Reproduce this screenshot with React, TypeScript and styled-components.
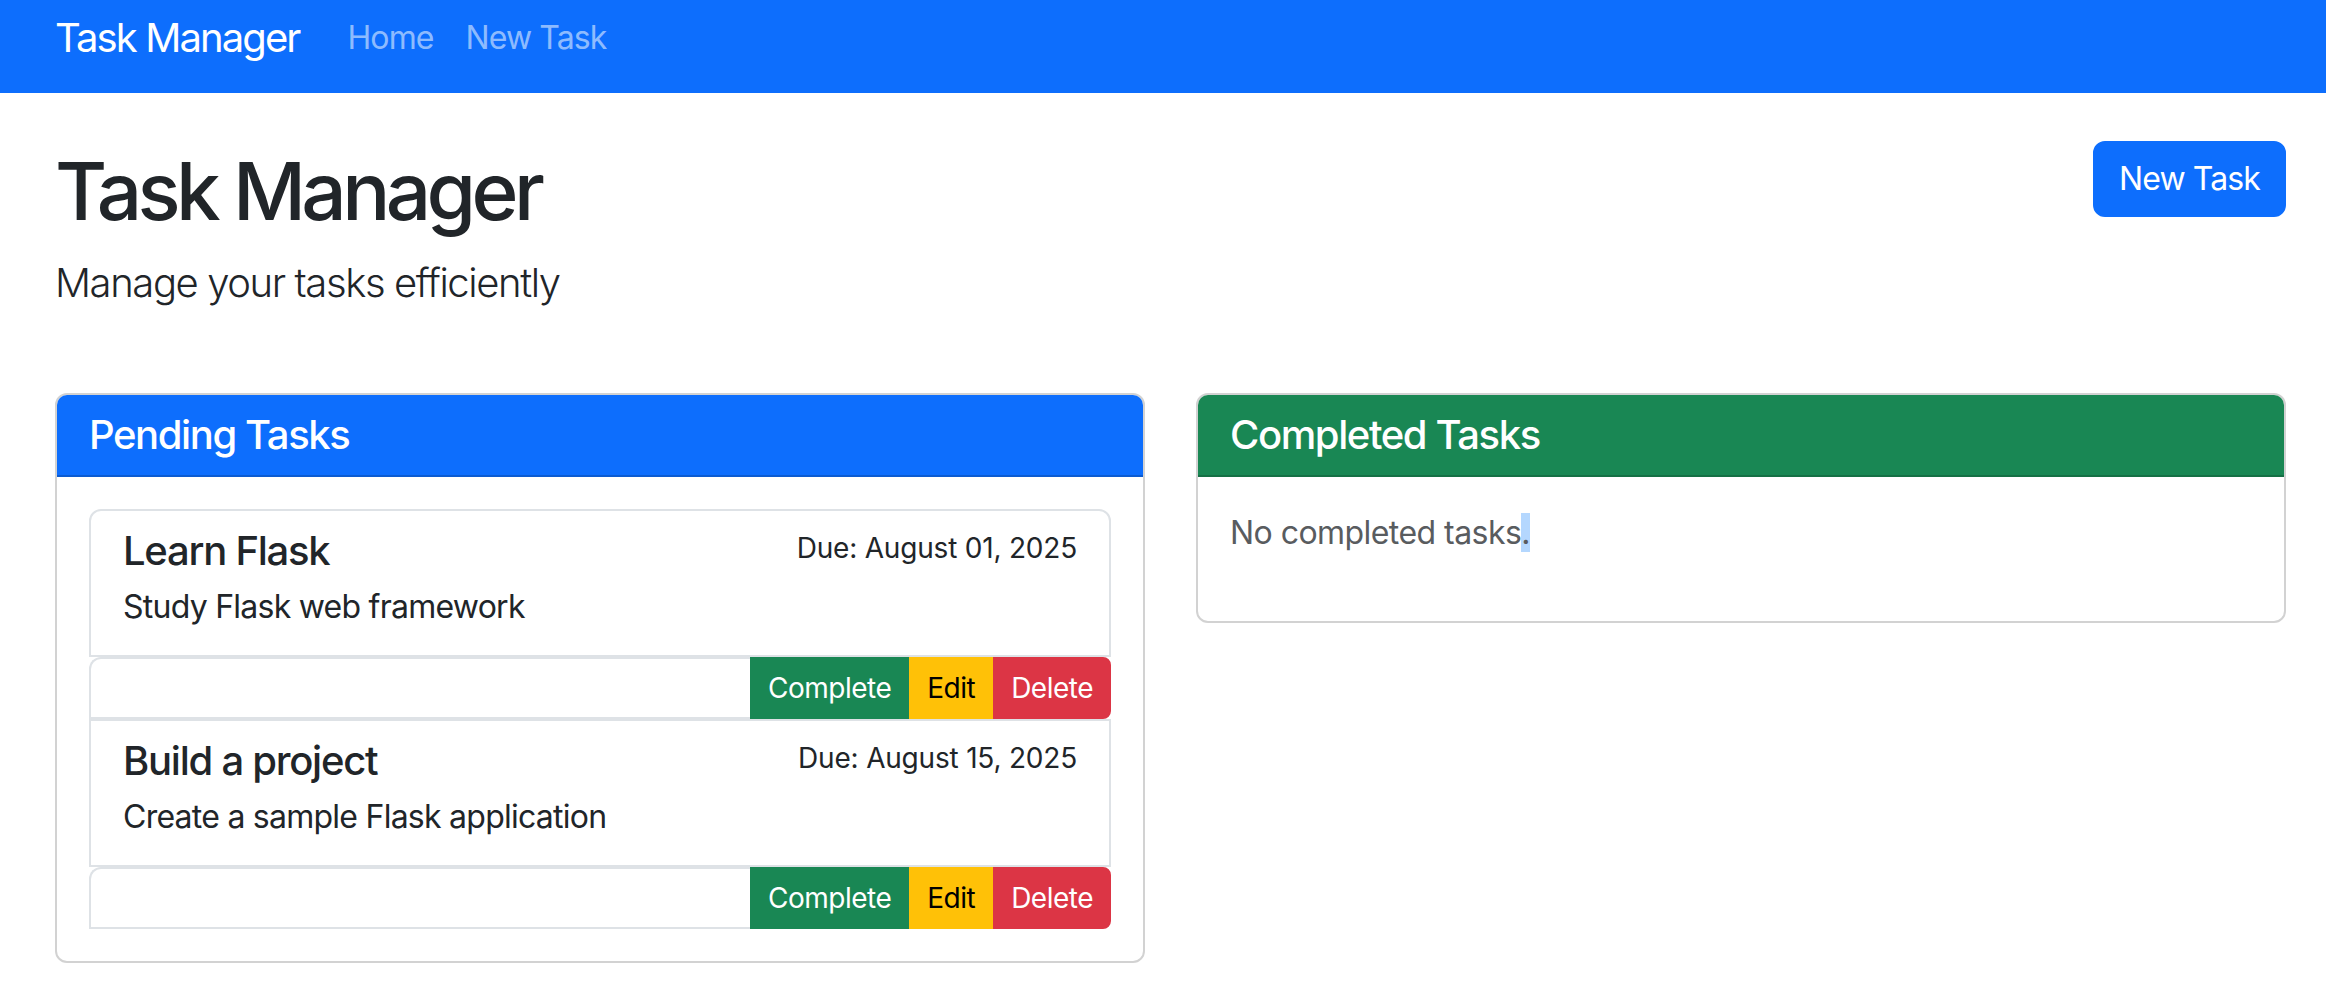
import React from "react";
import styled, { createGlobalStyle } from "styled-components";

const GlobalStyle = createGlobalStyle`
  *, *::before, *::after { box-sizing: border-box; }
  html, body { margin: 0; padding: 0; background: #fff; }
  body {
    font-family: Inter, "Noto Sans", "Liberation Sans", sans-serif;
    color: #212529;
  }
  h1, h5, p { margin: 0; }
`;

const Navbar = styled.nav`
  height: 93px;
  background: #0d6efd;
  display: flex;
  align-items: center;
  padding: 8px 40px 25px 55px;
`;

const Brand = styled.a`
  font-size: 40px;
  line-height: 60px;
  letter-spacing: -1.9px;
  color: #fff;
  text-decoration: none;
  margin-right: 32px;
`;

const NavLink = styled.a`
  font-size: 32px;
  line-height: 48px;
  letter-spacing: -0.9px;
  padding: 0 16px;
  color: rgba(255, 255, 255, 0.55);
  text-decoration: none;
`;

const Main = styled.main`
  padding: 48px 40px 0 55px;
`;

const PageHeader = styled.div`
  display: flex;
  justify-content: space-between;
  align-items: flex-start;
`;

const Title = styled.h1`
  font-size: 80px;
  line-height: 96px;
  font-weight: 500;
  letter-spacing: -4.6px;
  margin: 2px 0 14px;
`;

const Lead = styled.p`
  font-size: 40px;
  line-height: 60px;
  font-weight: 300;
  letter-spacing: -1.4px;
`;

const PrimaryButton = styled.button`
  font-family: inherit;
  font-size: 32px;
  line-height: 48px;
  letter-spacing: -0.9px;
  padding: 12px 24px;
  color: #fff;
  background: #0d6efd;
  border: 2px solid #0d6efd;
  border-radius: 12px;
`;

const Columns = styled.div`
  display: grid;
  grid-template-columns: 1fr 1fr;
  gap: 51px;
  align-items: start;
  margin-top: 80px;
`;

const Card = styled.section`
  border: 2px solid #d2d2d2;
  border-radius: 12px;
  overflow: hidden;
`;

const CardHeader = styled.div<{ $bg: string; $line: string }>`
  background: ${(p) => p.$bg};
  border-bottom: 2px solid ${(p) => p.$line};
  padding: 16px 32px;
`;

const HeaderTitle = styled.h5`
  font-size: 40px;
  line-height: 48px;
  font-weight: 500;
  letter-spacing: -1.4px;
  color: #fff;
`;

const CardBody = styled.div`
  padding: 32px;
`;

const TaskBody = styled.div<{ $first: boolean }>`
  border: 2px solid #dee2e6;
  border-radius: ${(p) => (p.$first ? "12px 12px 0 0" : "0")};
  padding: 16px 32px;
`;

const TitleRow = styled.div`
  display: flex;
  justify-content: space-between;
  align-items: flex-start;
`;

const TaskTitle = styled.h5`
  font-size: 40px;
  line-height: 48px;
  font-weight: 500;
  letter-spacing: -1.25px;
  margin-bottom: 8px;
`;

const Due = styled.small`
  font-size: 28px;
  line-height: 42px;
  letter-spacing: -0.2px;
`;

const Desc = styled.p`
  font-size: 32px;
  line-height: 48px;
  letter-spacing: -0.75px;
  margin-bottom: 8px;
`;

const ActionRow = styled.div`
  display: flex;
  height: 62px;
`;

const Filler = styled.div`
  flex: 1;
  border: 2px solid #dee2e6;
  border-right: none;
  border-top-left-radius: 12px;
`;

const variants = {
  success: { bg: "#198754", fg: "#fff" },
  warning: { bg: "#ffc107", fg: "#000" },
  danger: { bg: "#dc3545", fg: "#fff" },
};

const ActionButton = styled.button<{ $variant: keyof typeof variants; $last?: boolean }>`
  font-family: inherit;
  font-size: 28px;
  line-height: 42px;
  letter-spacing: -0.5px;
  padding: 8px 16px;
  background: ${(p) => variants[p.$variant].bg};
  color: ${(p) => variants[p.$variant].fg};
  border: 2px solid ${(p) => variants[p.$variant].bg};
  border-radius: ${(p) => (p.$last ? "0 8px 8px 0" : "0")};
`;

const Muted = styled.p`
  font-size: 32px;
  line-height: 48px;
  letter-spacing: -0.55px;
  color: #595c5f;
  margin-bottom: 32px;
`;

const Selected = styled.span`
  background: #b4d7fe;
`;

const tasks = [
  { title: "Learn Flask", due: "Due: August 01, 2025", desc: "Study Flask web framework" },
  { title: "Build a project", due: "Due: August 15, 2025", desc: "Create a sample Flask application" },
];

export default function App() {
  return (
    <>
      <GlobalStyle />
      <Navbar>
        <Brand>Task Manager</Brand>
        <NavLink>Home</NavLink>
        <NavLink>New Task</NavLink>
      </Navbar>
      <Main>
        <PageHeader>
          <div>
            <Title>Task Manager</Title>
            <Lead>Manage your tasks efficiently</Lead>
          </div>
          <PrimaryButton>New Task</PrimaryButton>
        </PageHeader>
        <Columns>
          <Card>
            <CardHeader $bg="#0d6efd" $line="#0b5bd1">
              <HeaderTitle>Pending Tasks</HeaderTitle>
            </CardHeader>
            <CardBody>
              {tasks.map((t, i) => (
                <React.Fragment key={t.title}>
                  <TaskBody $first={i === 0}>
                    <TitleRow>
                      <TaskTitle>{t.title}</TaskTitle>
                      <Due>{t.due}</Due>
                    </TitleRow>
                    <Desc>{t.desc}</Desc>
                  </TaskBody>
                  <ActionRow>
                    <Filler />
                    <ActionButton $variant="success">Complete</ActionButton>
                    <ActionButton $variant="warning">Edit</ActionButton>
                    <ActionButton $variant="danger" $last>Delete</ActionButton>
                  </ActionRow>
                </React.Fragment>
              ))}
            </CardBody>
          </Card>
          <Card>
            <CardHeader $bg="#198754" $line="#157045">
              <HeaderTitle>Completed Tasks</HeaderTitle>
            </CardHeader>
            <CardBody>
              <Muted>
                No completed tasks<Selected>.</Selected>
              </Muted>
            </CardBody>
          </Card>
        </Columns>
      </Main>
    </>
  );
}
